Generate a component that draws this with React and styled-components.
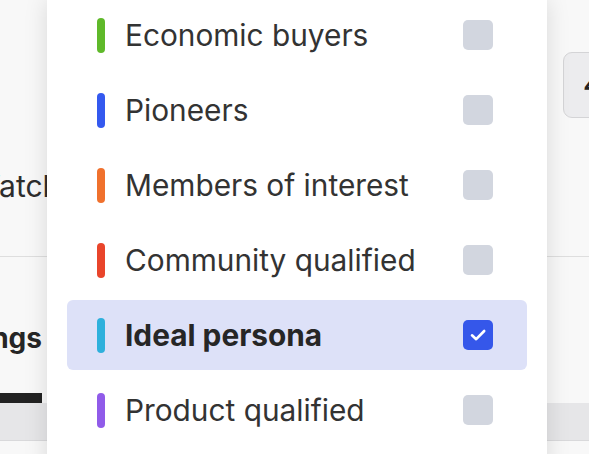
import styled, { createGlobalStyle } from "styled-components";

const Global = createGlobalStyle`
  html, body {
    margin: 0;
    padding: 0;
    overflow: hidden;
    background: #f6f6f6;
  }
  #root {
    width: 589px;
    height: 454px;
    overflow: hidden;
    position: relative;
    font-family: Inter, "Noto Sans", sans-serif;
  }
`;

const Page = styled.div`
  width: 100%;
  height: 454px;
  display: flex;
  flex-direction: column;
  background: #f8f8f8;
`;

const Header = styled.div`
  height: 256px;
  display: flex;
  justify-content: space-between;
  border-bottom: 1px solid #dedede;
`;

const Title = styled.div`
  margin: 168px 0 0 -29px;
  font-size: 30px;
  color: #2d2d2d;
  white-space: nowrap;
`;

const GhostButton = styled.div`
  margin: 52px -40px 0 0;
  width: 66px;
  height: 66px;
  border: 1px solid #d4d4d6;
  border-radius: 9px;
  background: #ececee;
  display: flex;
  align-items: center;
  justify-content: flex-start;
  padding-left: 20px;
  box-sizing: border-box;
  font-weight: 800;
  font-style: italic;
  font-size: 20px;
  color: #222;
`;

const Tabs = styled.div`
  height: 146px;
  display: flex;
  align-items: flex-end;
`;

const Tab = styled.div`
  margin-left: -71px;
  padding-bottom: 38px;
  border-bottom: 10px solid #222;
  font-size: 28px;
  font-weight: 700;
  color: #262626;
  white-space: nowrap;
`;

const Band = styled.div`
  height: 37px;
  background: #e6e6e8;
  border-bottom: 1px solid #d9d9db;
`;

const Menu = styled.div`
  position: absolute;
  left: 47px;
  top: 0;
  width: 500px;
  height: 470px;
  box-sizing: border-box;
  padding: 0 20px;
  background: #fff;
  box-shadow: 0 0 22px rgba(0, 0, 0, 0.13);
  display: flex;
  flex-direction: column;
  gap: 5px;
`;

const Row = styled.div`
  height: 70px;
  display: flex;
  align-items: center;
  padding: 0 34px 0 30px;
  border-radius: 6px;
  background: ${(p) => (p.$active ? "#dde1f8" : "transparent")};
`;

const Bar = styled.span`
  width: 8px;
  height: 35px;
  border-radius: 4px;
  background: ${(p) => p.$color};
  flex-shrink: 0;
`;

const Label = styled.span`
  margin-left: 20px;
  flex: 1;
  font-size: 29.8px;
  font-weight: ${(p) => (p.$active ? 700 : 400)};
  color: ${(p) => (p.$active ? "#262626" : "#333")};
  white-space: nowrap;
`;

const Check = styled.span`
  width: 30px;
  height: 30px;
  border-radius: 5px;
  background: ${(p) => (p.$on ? "#3557ea" : "#d2d6df")};
  display: flex;
  align-items: center;
  justify-content: center;
`;

const items = [
  { label: "Economic buyers", color: "#5fb92a" },
  { label: "Pioneers", color: "#3459ef" },
  { label: "Members of interest", color: "#f0712d" },
  { label: "Community qualified", color: "#e9452b" },
  { label: "Ideal persona", color: "#2eb0dc", active: true },
  { label: "Product qualified", color: "#905be9" },
];

export default function App() {
  return (
    <>
      <Global />
      <Page>
        <Header>
          <Title>Watch list</Title>
          <GhostButton>4</GhostButton>
        </Header>
        <Tabs>
          <Tab>Settings</Tab>
        </Tabs>
        <Band />
      </Page>
      <Menu>
        {items.map((it) => (
          <Row key={it.label} $active={it.active}>
            <Bar $color={it.color} />
            <Label $active={it.active}>{it.label}</Label>
            <Check $on={it.active}>
              {it.active && (
                <svg width="22" height="22" viewBox="0 0 22 22">
                  <path
                    d="M5 11.3 L9.2 15.2 L17.2 7"
                    fill="none"
                    stroke="#fff"
                    strokeWidth="2.6"
                    strokeLinecap="round"
                    strokeLinejoin="round"
                  />
                </svg>
              )}
            </Check>
          </Row>
        ))}
      </Menu>
    </>
  );
}
